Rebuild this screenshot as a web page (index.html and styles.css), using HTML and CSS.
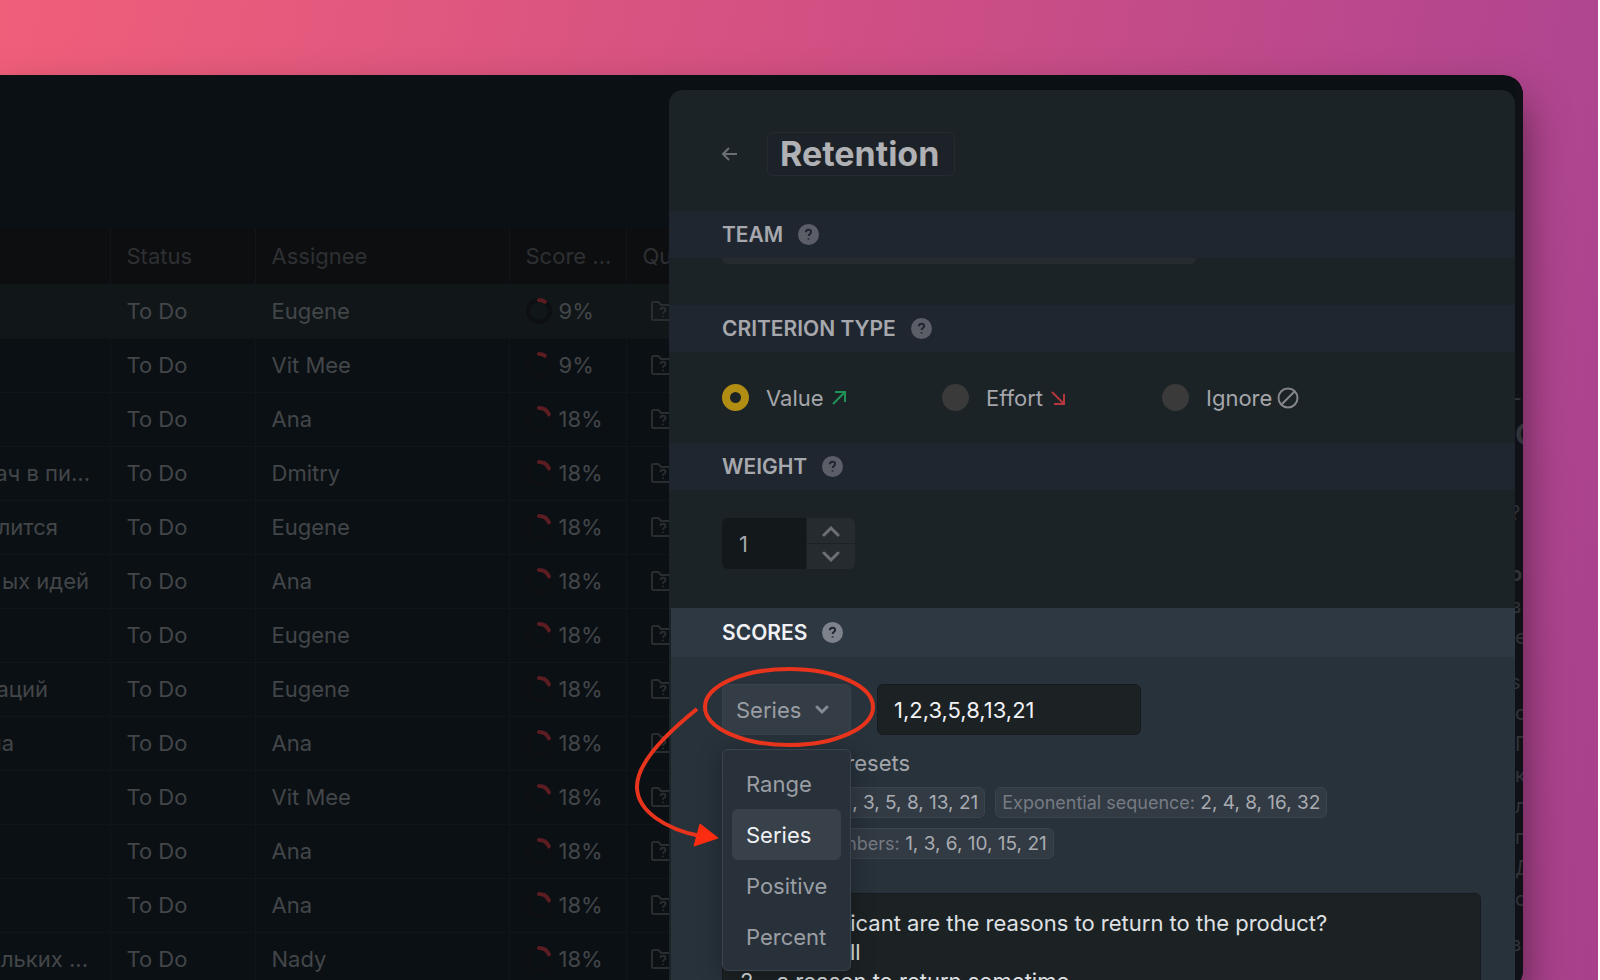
FILE: index.html
```html
<!DOCTYPE html>
<html lang="en">
<head>
    <meta charset="UTF-8">
    <meta name="viewport" content="width=device-width, initial-scale=1.0">
    <title>Retention</title>
    <link rel="stylesheet" href="styles.css">
</head>
<body>
    <svg class="sprite" aria-hidden="true">
        <symbol id="help" viewBox="0 0 21 21">
            <circle cx="10.500" cy="10.500" r="10.500" fill="currentColor"/>
            <path class="help-mark" d="M7.900 8.300c0-1.600 1.100-2.500 2.600-2.500s2.600.9 2.600 2.300c0 1.900-2.500 1.900-2.500 3.900M10.600 14.300v1.200"/>
        </symbol>
        <symbol id="folder" viewBox="0 0 26 22">
            <path d="M2 3.500Q2 2 3.500 2h5l2.500 3h11.500Q24 5 24 6.500v12q0 1.500-1.500 1.500h-19Q2 20 2 18.500z"/>
            <path d="M10.500 10c0-3 5-3 5 0 0 2-2.500 1.600-2.500 3.800M13 15.800v1.200"/>
        </symbol>
    </svg>

    <div class="window">
        <main class="board">
            <table>
                <colgroup>
                    <col class="col-name"><col class="col-status"><col class="col-assignee"><col class="col-score"><col class="col-quick">
                </colgroup>
                <thead>
                    <tr><th></th><th>Status</th><th>Assignee</th><th>Score ...</th><th>Quick</th></tr>
                </thead>
                <tbody id="rows"></tbody>
            </table>
        </main>

        <section class="panel">
            <header class="panel-header">
                <button class="back" aria-label="Back">
                    <svg width="16" height="14" viewBox="0 0 16 14"><path d="M7 1L1 7l6 6M1 7h14"/></svg>
                </button>
                <input class="title" type="text" value="Retention" aria-label="Criterion name">
            </header>

            <h2>TEAM <svg class="help"><use href="#help"/></svg></h2>
            <div class="team"><div class="team-field"></div></div>

            <h2>CRITERION TYPE <svg class="help"><use href="#help"/></svg></h2>
            <div class="types">
                <label><input type="radio" name="type" checked> <span>Value</span>
                    <svg class="up" width="14" height="14" viewBox="0 0 14 14"><path d="M1 13L13 1M3 1h10v10"/></svg>
                </label>
                <label><input type="radio" name="type"> <span>Effort</span>
                    <svg class="down" width="14" height="14" viewBox="0 0 14 14"><path d="M1 1l12 12M13 3v10H3"/></svg>
                </label>
                <label><input type="radio" name="type"> <span>Ignore</span>
                    <svg class="none" width="22" height="22" viewBox="0 0 22 22"><circle cx="11" cy="11" r="9.500"/><path d="M4.500 17.500l13-13"/></svg>
                </label>
            </div>

            <h2>WEIGHT <svg class="help"><use href="#help"/></svg></h2>
            <div class="weight">
                <input type="number" value="1" aria-label="Weight">
                <div class="stepper">
                    <button aria-label="Increase"><svg width="18" height="12" viewBox="0 0 18 12"><path d="M2 10l7-7 7 7"/></svg></button>
                    <button aria-label="Decrease"><svg width="18" height="12" viewBox="0 0 18 12"><path d="M2 2l7 7 7-7"/></svg></button>
                </div>
            </div>

            <div class="scores">
                <h2>SCORES <svg class="help"><use href="#help"/></svg></h2>
                <div class="scores-body">
                    <div class="scores-row">
                        <div class="picker">
                            <select aria-label="Score type">
                                <option>Range</option>
                                <option selected>Series</option>
                                <option>Positive</option>
                                <option>Percent</option>
                            </select>
                            <svg class="chevron" width="14" height="10" viewBox="0 0 14 10"><path d="M2 2l5 5 5-5"/></svg>
                            <div class="menu">
                                <button>Range</button>
                                <button class="active">Series</button>
                                <button>Positive</button>
                                <button>Percent</button>
                            </div>
                            <svg class="callout" width="260" height="200" viewBox="0 0 260 200">
                                <ellipse cx="167" cy="44" rx="84" ry="38"/>
                                <path d="M75 46C40 74 14 102 15 125S43 166 78 173"/>
                                <path class="head" d="M78 161l18 14-24 8z"/>
                            </svg>
                        </div>
                        <input class="series" type="text" value="1,2,3,5,8,13,21" aria-label="Series">
                    </div>
                    <p>Sequence presets</p>
                    <div class="presets">
                        <button><span>Fibonacci:</span> 1, 2, 3, 5, 8, 13, 21</button>
                        <button><span>Exponential sequence:</span> 2, 4, 8, 16, 32</button>
                        <button><span>Triangular numbers:</span> 1, 3, 6, 10, 15, 21</button>
                    </div>
                    <textarea aria-label="Description" spellcheck="false">How significant are the reasons to return to the product?
1 – not at all
2 – a reason to return sometime</textarea>
                </div>
            </div>
        </section>

        <aside class="edge">
            <div>L</div>
            <div class="big">C</div>
            <div>?</div>
            <div class="bold">ol</div>
            <p>в<br>е</p>
            <p>s<br>о<br>П<br>к<br>ле<br>п.<br>Д<br>ор</p>
            <p>в</p>
        </aside>
    </div>

    <script>
        // name, how much of it is scrolled into view, assignee, score
        const rows = [
            ["", 0, "Eugene", 9],
            ["", 0, "Vit Mee", 9],
            ["", 0, "Ana", 18],
            ["дач в пи...", 90, "Dmitry", 18],
            ["лится", 58, "Eugene", 18],
            ["ых идей", 89, "Ana", 18],
            ["", 0, "Eugene", 18],
            ["аций", 48, "Eugene", 18],
            ["на", 14, "Ana", 18],
            ["", 0, "Vit Mee", 18],
            ["", 0, "Ana", 18],
            ["", 0, "Ana", 18],
            ["ольких ...", 88, "Nady", 18],
        ];

        // pathLength is 100, so the score is the length of the arc
        document.getElementById("rows").innerHTML = rows.map(([name, shown, assignee, score]) => `
            <tr>
                <td class="name"><div style="width: ${shown}px">${name}</div></td>
                <td>To Do</td>
                <td>${assignee}</td>
                <td><div class="score">
                    <svg width="26" height="28" viewBox="0 0 26 28">
                        <circle class="track" cx="13" cy="14" r="11"/>
                        <circle class="arc" cx="13" cy="14" r="11" pathLength="100" stroke-dasharray="${score} 100" transform="rotate(-90 13 14)"/>
                    </svg>${score}%</div></td>
                <td><svg class="folder" width="26" height="22"><use href="#folder"/></svg></td>
            </tr>`).join("");
    </script>
</body>
</html>
```

FILE: styles.css
```css
* {
    box-sizing: border-box;
}
body {
    margin: 0;
    height: 100vh;
    padding: 75px 75px 0 0;
    border-right: 2px solid #fff;
    overflow: hidden;
    background: linear-gradient(100deg, #f05f7a 0%, #d25083 46%, #b04590 90%, #a8408b 100%);
    font-family: Inter, "Noto Sans", sans-serif;
    font-size: 22px;
    line-height: 28px;
    color: #a4a6ab;
}
button, input, select, textarea {
    font: inherit;
    color: inherit;
    border: 0;
    padding: 0;
    margin: 0;
    background: none;
}
svg {
    flex: none;
    fill: none;
    stroke: currentColor;
    stroke-width: 2;
}
.sprite {
    display: none;
}
.window {
    display: grid;
    grid-template-columns: 669px minmax(0, 1fr) 8px;
    height: calc(100vh - 65px);
    background: #0b1014;
    border-radius: 0 20px 20px 0;
    box-shadow: 0 24px 44px rgba(0, 0, 0, 0.5);
    overflow: hidden;
}

/* task table */
.board {
    padding-top: 153px;
    overflow: hidden;
    color: #434649;
}
table {
    width: 746px;
    table-layout: fixed;
    border-collapse: collapse;
}
.col-name { width: 110px; }
.col-status { width: 145px; }
.col-assignee { width: 254px; }
.col-score { width: 117px; }
.col-quick { width: 120px; }
th, td {
    height: 54px;
    padding: 0 0 0 16px;
    text-align: left;
    font-weight: 400;
    white-space: nowrap;
    border-right: 1px solid #101519;
    border-bottom: 1px solid #101519;
}
th {
    height: 56px;
    background: #0d0e10;
    color: #2e3033;
}
tbody tr:first-child {
    background: #111619;
}
.name {
    padding: 0;
}
.name div {
    display: flex;
    justify-content: flex-end;
    overflow: hidden;
}
.score {
    display: flex;
    align-items: center;
    gap: 7px;
}
.score svg {
    stroke-width: 4;
}
.track {
    stroke: #0e0f13;
}
.arc {
    stroke: #5c1d22;
    stroke-linecap: round;
}
.folder {
    display: block;
    margin-left: 7px;
    color: #2a2d30;
}

/* settings panel */
.panel {
    position: relative;
    margin-top: 15px;
    background: #1c2326;
    border-radius: 14px 14px 0 0;
}
.panel::after {
    content: "";
    position: absolute;
    inset: auto 0 0;
    height: 16px;
    background: rgba(12, 15, 20, 0.6);
}
.panel-header {
    display: flex;
    align-items: center;
    gap: 29px;
    height: 121px;
    padding: 6px 53px 0;
}
.back {
    display: flex;
    width: 16px;
    color: #6b6e72;
}
.title {
    width: 188px;
    height: 44px;
    padding-left: 12px;
    border: 1px solid #262b33;
    border-radius: 6px;
    background: #1d2228;
    font-size: 34px;
    font-weight: 700;
    color: #b0b1b5;
}
h2 {
    display: flex;
    align-items: center;
    gap: 15px;
    height: 47px;
    margin: 0;
    padding: 0 53px;
    background: #20262f;
    font-size: 21px;
    font-weight: 600;
    color: #a6a8ad;
}
.help {
    width: 21px;
    height: 21px;
    stroke: none;
    color: #5b5e66;
}
.help-mark {
    stroke: #20262f;
    stroke-width: 2;
}
.team {
    height: 47px;
    padding: 0 53px;
}
.team-field {
    width: 474px;
    height: 6px;
    background: #262b2f;
    border-radius: 0 0 6px 6px;
}
.types {
    display: grid;
    grid-template-columns: repeat(3, 220px);
    height: 91px;
    padding: 0 53px;
}
.types label {
    display: flex;
    align-items: center;
}
.types input {
    appearance: none;
    width: 27px;
    height: 27px;
    margin-right: 17px;
    border-radius: 50%;
    background: #3a3a3b;
}
.types input:checked {
    background: #1c2326;
    border: 8px solid #b18d14;
}
.up, .down {
    margin-left: 8px;
}
.up {
    color: #1f9257;
}
.down {
    color: #b5363c;
}
.none {
    margin-left: 5px;
    color: #84868b;
}
.weight {
    display: flex;
    height: 118px;
    padding: 28px 53px 39px;
}
.weight input {
    appearance: textfield;
    width: 84px;
    padding-left: 17px;
    background: #13181b;
    border-radius: 6px 0 0 6px;
}
.stepper {
    display: flex;
    flex-direction: column;
    gap: 1px;
    width: 49px;
    border-left: 1px solid #1c2326;
}
.stepper button {
    display: flex;
    flex: 1;
    align-items: center;
    justify-content: center;
    background: #262b2f;
    color: #6c6f73;
}
.stepper button:first-child {
    border-top-right-radius: 6px;
}
.stepper button:last-child {
    border-bottom-right-radius: 6px;
}
.stepper svg {
    stroke-width: 3;
    stroke-linecap: round;
}

/* scores */
.scores {
    margin-left: 2px;
    background: #28323a;
}
.scores h2 {
    height: 49px;
    padding: 0 51px;
    background: #2e3842;
    color: #f0f1f4;
}
.scores .help {
    color: #7e838b;
}
.scores-body {
    padding: 27px 34px 0 51px;
}
.scores-row {
    display: flex;
    gap: 26px;
}
.picker {
    position: relative;
    width: 129px;
    color: #9a9ea4;
}
.picker select {
    appearance: none;
    width: 100%;
    height: 51px;
    padding-left: 13px;
    border: 1px solid #39424b;
    border-radius: 6px;
    background: #343c45;
}
.chevron {
    position: absolute;
    right: 22px;
    top: 21px;
    color: #868b92;
    stroke-width: 3;
    stroke-linecap: round;
}
.menu {
    position: absolute;
    left: 0;
    top: 65px;
    z-index: 1;
    width: 129px;
    padding: 8px 9px;
    border: 1px solid #3b444d;
    border-radius: 6px;
    background: #28313a;
    box-shadow: 0 4px 24px rgba(0, 0, 0, 0.3);
}
.menu button {
    display: block;
    width: 100%;
    height: 51px;
    padding-left: 14px;
    border-radius: 6px;
    text-align: left;
}
.menu .active {
    background: #38414a;
    color: #f0f1f4;
}
.series {
    width: 264px;
    padding-left: 16px;
    border: 1px solid #171b21;
    border-radius: 6px;
    background: #1c2124;
    color: #f0f1f4;
}
.scores-body p {
    margin: 14px 0 10px;
}
.presets {
    display: flex;
    flex-wrap: wrap;
    gap: 10px;
    width: 640px;
}
.presets button {
    height: 31px;
    padding: 0 6px;
    border: 1px solid #3b444d;
    border-radius: 6px;
    background: #323a43;
    font-size: 19px;
    line-height: 28px;
    color: #a9acb2;
}
.presets span {
    font-size: 18px;
    color: #767b83;
}
textarea {
    display: block;
    width: 100%;
    height: 160px;
    margin-top: 34px;
    padding: 15px 17px;
    border: 1px solid #171b21;
    border-radius: 6px;
    background: #1c2224;
    line-height: 29px;
    color: #dfe0e3;
    resize: none;
    overflow: hidden;
}

/* red mark over the picker, spills out of the panel */
.callout {
    position: absolute;
    left: -100px;
    top: -21px;
    z-index: 2;
    stroke: #e8341c;
    stroke-width: 4;
    pointer-events: none;
}
.head {
    fill: #fb2c10;
    stroke: #fb2c10;
    stroke-width: 1;
}

/* column hidden behind the panel */
.edge {
    padding-top: 303px;
    overflow: hidden;
    background: #0f1117;
    font-size: 20px;
    line-height: 31px;
    text-indent: -5px;
    color: #303338;
}
.edge div {
    height: 88px;
}
.edge .big {
    height: 66px;
    margin-top: -47px;
    font-size: 30px;
    font-weight: 700;
    text-indent: 0;
}
.edge .bold {
    font-weight: 700;
    height: 32px;
}
.edge div:nth-child(3) {
    height: 74px;
    padding-top: 13px;
}
.edge p {
    margin: 0 0 14px;
}
```
